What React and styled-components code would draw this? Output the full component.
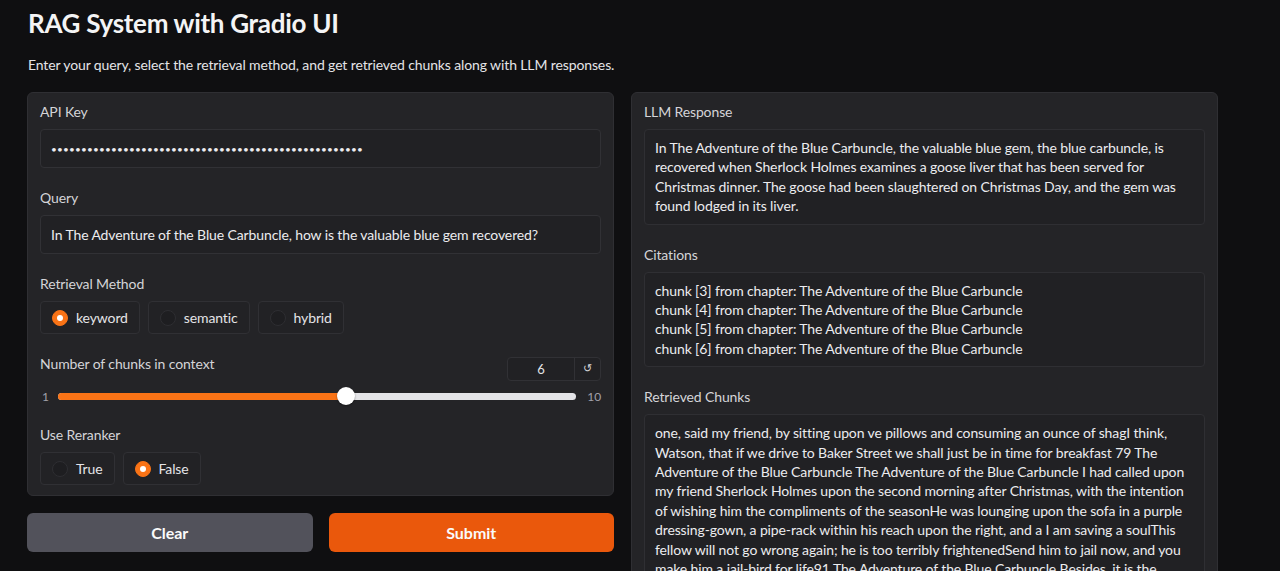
import styled, { createGlobalStyle } from 'styled-components';

const GlobalStyle = createGlobalStyle`
  html, body {
    margin: 0;
    background: #0f0f11;
    color: #e4e4e7;
    font-family: Lato, "Noto Sans", sans-serif;
    letter-spacing: -0.12px;
  }
  * { box-sizing: border-box; }
`;

const response =
  'In The Adventure of the Blue Carbuncle, the valuable blue gem, the blue carbuncle, is recovered when Sherlock Holmes examines a goose liver that has been served for Christmas dinner. The goose had been slaughtered on Christmas Day, and the gem was found lodged in its liver.';

const citations = [3, 4, 5, 6].map(n => `chunk [${n}] from chapter: The Adventure of the Blue Carbuncle`);

const chunks =
  'one, said my friend, by sitting upon ve pillows and consuming an ounce of shagI think, Watson, that if we drive to Baker Street we shall just be in time for breakfast 79 The Adventure of the Blue Carbuncle The Adventure of the Blue Carbuncle I had called upon my friend Sherlock Holmes upon the second morning after Christmas, with the intention of wishing him the compliments of the seasonHe was lounging upon the sofa in a purple dressing-gown, a pipe-rack within his reach upon the right, and a I am saving a soulThis fellow will not go wrong again; he is too terribly frightenedSend him to jail now, and you make him a jail-bird for life91 The Adventure of the Blue Carbuncle Besides, it is the season of forgiveness. Chance has put in our way a most singular and whimsical problem, and its solution is its own reward.';

export default function App() {
  return (
    <Page>
      <GlobalStyle />
      <Title>RAG System with Gradio UI</Title>
      <Subtitle>
        Enter your query, select the retrieval method, and get retrieved chunks along with LLM responses.
      </Subtitle>
      <Columns>
        <Column>
          <Panel>
            <Field>
              <Label>API Key</Label>
              <TextBox>
                <Dots>{'•'.repeat(52)}</Dots>
              </TextBox>
            </Field>
            <Field>
              <Label>Query</Label>
              <TextBox>In The Adventure of the Blue Carbuncle, how is the valuable blue gem recovered?</TextBox>
            </Field>
            <Field>
              <Label>Retrieval Method</Label>
              <RadioGroup>
                {['keyword', 'semantic', 'hybrid'].map(opt => (
                  <RadioItem key={opt}>
                    <RadioDot checked={opt === 'keyword'} />
                    {opt}
                  </RadioItem>
                ))}
              </RadioGroup>
            </Field>
            <Field>
              <SliderHead>
                <Label>Number of chunks in context</Label>
                <NumberBox>
                  <NumberValue>6</NumberValue>
                  <ResetBtn>↺</ResetBtn>
                </NumberBox>
              </SliderHead>
              <SliderRow>
                <Tick>1</Tick>
                <Track>
                  <Fill style={{ width: `${(5 / 9) * 100}%` }} />
                  <Thumb style={{ left: `${(5 / 9) * 100}%` }} />
                </Track>
                <Tick>10</Tick>
              </SliderRow>
            </Field>
            <Field>
              <Label>Use Reranker</Label>
              <RadioGroup>
                {['True', 'False'].map(opt => (
                  <RadioItem key={opt}>
                    <RadioDot checked={opt === 'False'} />
                    {opt}
                  </RadioItem>
                ))}
              </RadioGroup>
            </Field>
          </Panel>
          <Buttons>
            <Button>Clear</Button>
            <Button primary>Submit</Button>
          </Buttons>
        </Column>
        <Panel>
          <Field>
            <Label>LLM Response</Label>
            <OutputBox>{response}</OutputBox>
          </Field>
          <Field>
            <Label>Citations</Label>
            <OutputBox>
              {citations.map(c => (
                <div key={c}>{c}</div>
              ))}
            </OutputBox>
          </Field>
          <Field>
            <Label>Retrieved Chunks</Label>
            <OutputBox>{chunks}</OutputBox>
          </Field>
        </Panel>
      </Columns>
    </Page>
  );
}

const Page = styled.div`
  width: 1218px;
  padding-left: 27px;
`;

const Title = styled.h1`
  margin: 6px 0 0 1px;
  font-size: 26px;
  line-height: 34px;
  font-weight: 700;
  letter-spacing: -0.3px;
  color: #f4f4f5;
`;

const Subtitle = styled.p`
  margin: 15px 0 0 1px;
  font-size: 14px;
  line-height: 20px;
  color: #e4e4e7;
`;

const Columns = styled.div`
  display: grid;
  grid-template-columns: 1fr 1fr;
  gap: 17px;
  margin-top: 17px;
  align-items: start;
`;

const Column = styled.div`
  display: flex;
  flex-direction: column;
  gap: 17px;
`;

const Panel = styled.div`
  display: flex;
  flex-direction: column;
  gap: 20px;
  padding: 9px 12px 10px;
  background: #242427;
  border: 1px solid #2f2f33;
  border-radius: 6px;
`;

const Field = styled.div`
  display: flex;
  flex-direction: column;
  gap: 7px;
`;

const Label = styled.span`
  font-size: 14px;
  line-height: 20px;
  color: #d4d4d8;
`;

const TextBox = styled.div`
  height: 39px;
  display: flex;
  align-items: center;
  padding: 0 10px;
  background: #212124;
  border: 1px solid #313135;
  border-radius: 4px;
  font-size: 14px;
  color: #ececef;
`;

const Dots = styled.span`
  font-size: 10px;
  letter-spacing: 0.2px;
`;

const RadioGroup = styled.div`
  display: flex;
  gap: 8px;
`;

const RadioItem = styled.label`
  display: flex;
  align-items: center;
  gap: 8px;
  height: 33px;
  padding: 0 11px;
  background: #222225;
  border: 1px solid #303034;
  border-radius: 4px;
  font-size: 14px;
  color: #e4e4e7;
`;

const RadioDot = styled.span`
  width: 16px;
  height: 16px;
  border-radius: 50%;
  background: ${p => (p.checked ? '#f97316' : '#1e1e21')};
  border: 1px solid ${p => (p.checked ? '#f97316' : '#2e2e32')};
  display: flex;
  align-items: center;
  justify-content: center;
  &::after {
    content: '';
    width: 6px;
    height: 6px;
    border-radius: 50%;
    background: ${p => (p.checked ? '#fff' : 'transparent')};
  }
`;

const SliderHead = styled.div`
  display: flex;
  justify-content: space-between;
  align-items: flex-start;
`;

const NumberBox = styled.div`
  display: flex;
  width: 94px;
  height: 24px;
  margin-top: 3px;
  margin-bottom: -3px;
  border: 1px solid #313135;
  border-radius: 4px;
  background: #212124;
`;

const NumberValue = styled.span`
  flex: 1;
  text-align: center;
  font-size: 13px;
  line-height: 22px;
  color: #e4e4e7;
`;

const ResetBtn = styled.span`
  width: 26px;
  border-left: 1px solid #313135;
  text-align: center;
  font-family: "DejaVu Sans", sans-serif;
  font-size: 11px;
  line-height: 22px;
  color: #d4d4d8;
`;

const SliderRow = styled.div`
  display: flex;
  align-items: center;
  gap: 9px;
  height: 18px;
  margin-top: 2px;
`;

const Tick = styled.span`
  font-size: 12px;
  color: #a1a1aa;
  padding-left: 2px;
`;

const Track = styled.div`
  position: relative;
  flex: 1;
  height: 7px;
  border-radius: 4px;
  background: #e4e4e7;
`;

const Fill = styled.div`
  height: 100%;
  border-radius: 4px;
  background: #f97316;
`;

const Thumb = styled.div`
  position: absolute;
  top: 50%;
  width: 18px;
  height: 18px;
  margin: -9px 0 0 -9px;
  border-radius: 50%;
  background: #fff;
  box-shadow: 0 1px 2px rgba(0, 0, 0, 0.4);
`;

const Buttons = styled.div`
  display: grid;
  grid-template-columns: 1fr 1fr;
  gap: 16px;
`;

const Button = styled.button`
  height: 39px;
  border: none;
  border-radius: 6px;
  background: ${p => (p.primary ? '#ea580c' : '#52525b')};
  color: #fafafa;
  font-family: Lato, sans-serif;
  font-size: 16px;
  font-weight: 700;
`;

const OutputBox = styled.div`
  padding: 8px 10px;
  background: #212124;
  border: 1px solid #2f2f33;
  border-radius: 4px;
  font-size: 14px;
  line-height: 19.4px;
  color: #ececef;
`;
